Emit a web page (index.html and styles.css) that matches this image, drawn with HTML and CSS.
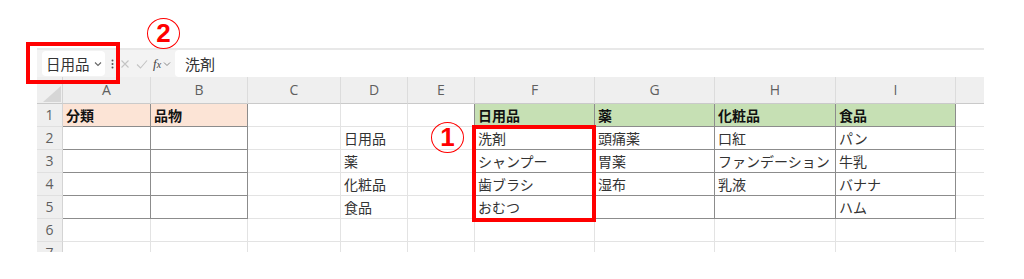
FILE: index.html
```html
<!DOCTYPE html>
<html lang="ja">
<head>
    <meta charset="UTF-8">
    <title>分類と品物</title>
    <link rel="stylesheet" href="styles.css">
</head>
<body>
<div class="page">
    <div class="sheet">
        <!-- 数式バー -->
        <div class="fbar">
            <div class="namebox">
                <span>日用品</span>
                <svg class="chev" width="8" height="6" viewBox="0 0 8 6"><polyline points="1,1.5 4,4.5 7,1.5" fill="none" stroke="#666" stroke-width="1.1"/></svg>
            </div>
            <svg class="dots" width="3" height="10" viewBox="0 0 3 10"><circle cx="1.5" cy="1.5" r="1" fill="#555"/><circle cx="1.5" cy="5" r="1" fill="#555"/><circle cx="1.5" cy="8.5" r="1" fill="#555"/></svg>
            <svg class="ico" width="10" height="10" viewBox="0 0 10 10"><path d="M1.5 1.5 L8.5 8.5 M8.5 1.5 L1.5 8.5" stroke="#c4c4c4" stroke-width="1.1"/></svg>
            <svg class="ico" width="12" height="10" viewBox="0 0 12 10"><polyline points="1,5.5 4.5,9 11,1.5" fill="none" stroke="#c4c4c4" stroke-width="1.1"/></svg>
            <span class="fx"><i>f</i><small>x</small></span>
            <svg class="chev2" width="8" height="6" viewBox="0 0 8 6"><polyline points="1,1.5 4,4.5 7,1.5" fill="none" stroke="#888" stroke-width="1"/></svg>
            <div class="formula">洗剤</div>
        </div>

        <!-- シート本体 -->
        <div class="grid">
            <div class="c k"><svg width="20" height="18" viewBox="0 0 20 18"><polygon points="19,1 19,17 1,17" fill="#d6d6d6"/></svg></div>
            <div class="c h">A</div><div class="c h">B</div><div class="c h">C</div><div class="c h">D</div><div class="c h">E</div>
            <div class="c h">F</div><div class="c h">G</div><div class="c h">H</div><div class="c h">I</div><div class="c h last"></div>

            <div class="c r">1</div>
            <div class="c bd pe b">分類</div><div class="c bd pe b">品物</div><div class="c"></div><div class="c"></div><div class="c bl"></div>
            <div class="c bd gr b">日用品</div><div class="c bd gr b">薬</div><div class="c bd gr b">化粧品</div><div class="c bd gr b">食品</div><div class="c last"></div>

            <div class="c r">2</div>
            <div class="c bd"></div><div class="c bd"></div><div class="c"></div><div class="c">日用品</div><div class="c bl"></div>
            <div class="c bd">洗剤</div><div class="c bd">頭痛薬</div><div class="c bd">口紅</div><div class="c bd">パン</div><div class="c last"></div>

            <div class="c r">3</div>
            <div class="c bd"></div><div class="c bd"></div><div class="c"></div><div class="c">薬</div><div class="c bl"></div>
            <div class="c bd">シャンプー</div><div class="c bd">胃薬</div><div class="c bd">ファンデーション</div><div class="c bd">牛乳</div><div class="c last"></div>

            <div class="c r">4</div>
            <div class="c bd"></div><div class="c bd"></div><div class="c"></div><div class="c">化粧品</div><div class="c bl"></div>
            <div class="c bd">歯ブラシ</div><div class="c bd">湿布</div><div class="c bd">乳液</div><div class="c bd">バナナ</div><div class="c last"></div>

            <div class="c r">5</div>
            <div class="c bd"></div><div class="c bd"></div><div class="c"></div><div class="c">食品</div><div class="c bl"></div>
            <div class="c bd">おむつ</div><div class="c bd"></div><div class="c bd"></div><div class="c bd">ハム</div><div class="c last"></div>

            <div class="c r">6</div>
            <div class="c"></div><div class="c"></div><div class="c"></div><div class="c"></div><div class="c"></div>
            <div class="c"></div><div class="c"></div><div class="c"></div><div class="c"></div><div class="c last"></div>

            <div class="c r">7</div>
            <div class="c"></div><div class="c"></div><div class="c"></div><div class="c"></div><div class="c"></div>
            <div class="c"></div><div class="c"></div><div class="c"></div><div class="c"></div><div class="c last"></div>
        </div>
    </div>

    <!-- 注釈 -->
    <div class="mark mark-name"></div>
    <div class="mark mark-range"></div>
    <div class="num num-1">1</div>
    <div class="num num-2">2</div>
</div>
</body>
</html>
```

FILE: styles.css
```css
body {
    margin: 0;
    background: #fff;
    font-family: "Noto Sans CJK JP", "Noto Sans", sans-serif;
}

.page {
    position: relative;
    width: 1024px;
    height: 279px;
    overflow: hidden;
}

.sheet {
    padding-top: 48px;
    margin-left: 37px;
    width: 947px;
}

/* 数式バー */
.fbar {
    display: flex;
    align-items: center;
    height: 27px;
    border-top: 2px solid #e8e8e8;
    background: #f3f3f3;
}

.namebox {
    display: flex;
    align-items: center;
    justify-content: space-between;
    box-sizing: border-box;
    margin-left: 5px;
    width: 63px;
    height: 25px;
    padding: 0 3px 0 4px;
    background: #fff;
    border-radius: 4px;
    font-size: 14.5px;
    color: #333;
}

.dots {
    margin-left: 6px;
}

.ico {
    margin-left: 6px;
}

.fx {
    margin-left: 5px;
    font-family: "Liberation Serif", serif;
    font-size: 13px;
    color: #444;
}

.fx small {
    font-size: 10px;
    font-style: italic;
}

.chev2 {
    margin-left: 2px;
}

.formula {
    flex: 1;
    margin-left: 4px;
    height: 27px;
    line-height: 27px;
    padding-left: 10px;
    background: #fff;
    border-radius: 4px 0 0 4px;
    font-size: 15px;
    color: #333;
}

/* シート */
.grid {
    display: grid;
    grid-template-columns: 26px 88px 97px 93px 67px 67px 120px 120px 121px 120px 28px;
    grid-template-rows: 27px repeat(7, 23px);
    height: 175px;
    overflow: hidden;
}

.c {
    box-sizing: border-box;
    border-right: 1px solid #e3e3e3;
    border-bottom: 1px solid #e3e3e3;
    padding-left: 3px;
    font-size: 14px;
    line-height: 22px;
    color: #333;
    white-space: nowrap;
    overflow: hidden;
}

.c.last {
    border-right: none;
}

.k {
    padding: 0;
    background: #efefef;
    border-right: 1px solid #d4d4d4;
    border-bottom: 1px solid #cacaca;
    display: flex;
    align-items: flex-end;
    justify-content: flex-end;
}

.h {
    padding: 0;
    background: #efefef;
    border-right: 1px solid #dcdcdc;
    border-bottom: 1px solid #cacaca;
    text-align: center;
    line-height: 26px;
    font-family: "Open Sans", "Noto Sans", sans-serif;
    font-size: 14px;
    color: #5f5f5f;
}

.r {
    padding: 0;
    background: #efefef;
    border-right: 1px solid #d4d4d4;
    border-bottom: 1px solid #e0e0e0;
    text-align: center;
    font-family: "Open Sans", "Noto Sans", sans-serif;
    font-size: 14px;
    color: #5f5f5f;
}

.bd {
    border-right-color: #8c8c8c;
    border-bottom-color: #8c8c8c;
}

.bl {
    border-right-color: #8c8c8c;
}

.pe {
    background: #fce4d6;
}

.gr {
    background: #c6e0b4;
}

.b {
    font-weight: bold;
    color: #111;
}

/* 注釈 */
.mark {
    position: absolute;
    box-sizing: border-box;
    border: 4px solid #f00;
}

.mark-name {
    left: 26px;
    top: 42px;
    width: 94px;
    height: 42px;
}

.mark-range {
    left: 472px;
    top: 125px;
    width: 124px;
    height: 97px;
}

.num {
    position: absolute;
    box-sizing: border-box;
    width: 33px;
    height: 31px;
    border: 1.8px solid #f00;
    border-radius: 50%;
    color: #f00;
    font-family: "Liberation Sans", sans-serif;
    font-weight: bold;
    font-size: 26px;
    line-height: 28px;
    text-align: center;
}

.num-1 {
    left: 431px;
    top: 122px;
}

.num-2 {
    left: 147px;
    top: 18px;
}
```
